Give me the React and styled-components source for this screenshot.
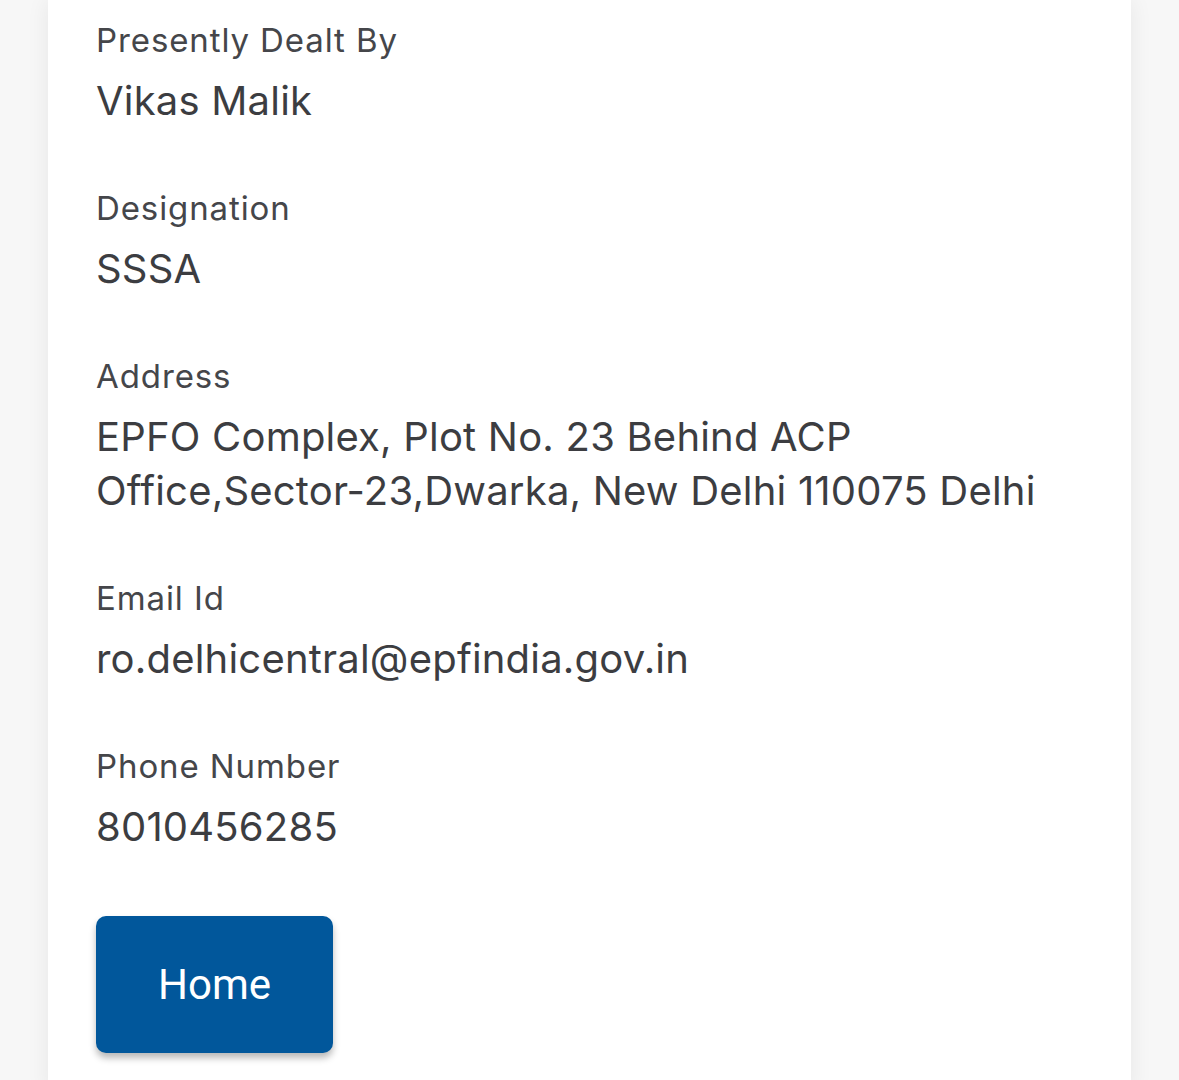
import React from "react";
import styled, { createGlobalStyle } from "styled-components";

const GlobalStyle = createGlobalStyle`
  html, body {
    margin: 0;
    padding: 0;
    background: #f7f7f7;
  }
  body {
    font-family: "Inter", "Noto Sans", sans-serif;
  }
`;

const Page = styled.div`
  display: flex;
  justify-content: flex-start;
  padding: 0 48px;
  min-height: 1080px;
`;

const Card = styled.div`
  flex: 1;
  background: #ffffff;
  box-shadow: 0 0 22px rgba(0, 0, 0, 0.07);
  padding: 18px 48px 40px;
  display: flex;
  flex-direction: column;
`;

const Field = styled.div`
  display: flex;
  flex-direction: column;
  gap: 12px;
  margin-bottom: 58px;
`;

const Label = styled.div`
  font-size: 33px;
  line-height: 44px;
  letter-spacing: 0.9px;
  color: #45464a;
`;

const Value = styled.div`
  font-size: 40px;
  line-height: 54px;
  letter-spacing: 0.2px;
  color: #3c3d41;
`;

const HomeButton = styled.button`
  margin-top: 4px;
  width: 237px;
  height: 137px;
  border: none;
  border-radius: 10px;
  background: #01579b;
  color: #ffffff;
  font-family: "Roboto", "Liberation Sans", sans-serif;
  font-size: 42px;
  box-shadow: 0 5px 7px rgba(0, 0, 0, 0.28);
  cursor: pointer;
`;

const fields = [
  { label: "Presently Dealt By", value: "Vikas Malik" },
  { label: "Designation", value: "SSSA" },
  {
    label: "Address",
    value: "EPFO Complex, Plot No. 23 Behind ACP Office,Sector-23,Dwarka, New Delhi 110075 Delhi",
  },
  { label: "Email Id", value: "ro.delhicentral@epfindia.gov.in" },
  { label: "Phone Number", value: "8010456285" },
];

export default function App() {
  return (
    <>
      <GlobalStyle />
      <Page>
        <Card>
          {fields.map((f) => (
            <Field key={f.label}>
              <Label>{f.label}</Label>
              <Value>{f.value}</Value>
            </Field>
          ))}
          <div>
            <HomeButton>Home</HomeButton>
          </div>
        </Card>
      </Page>
    </>
  );
}
